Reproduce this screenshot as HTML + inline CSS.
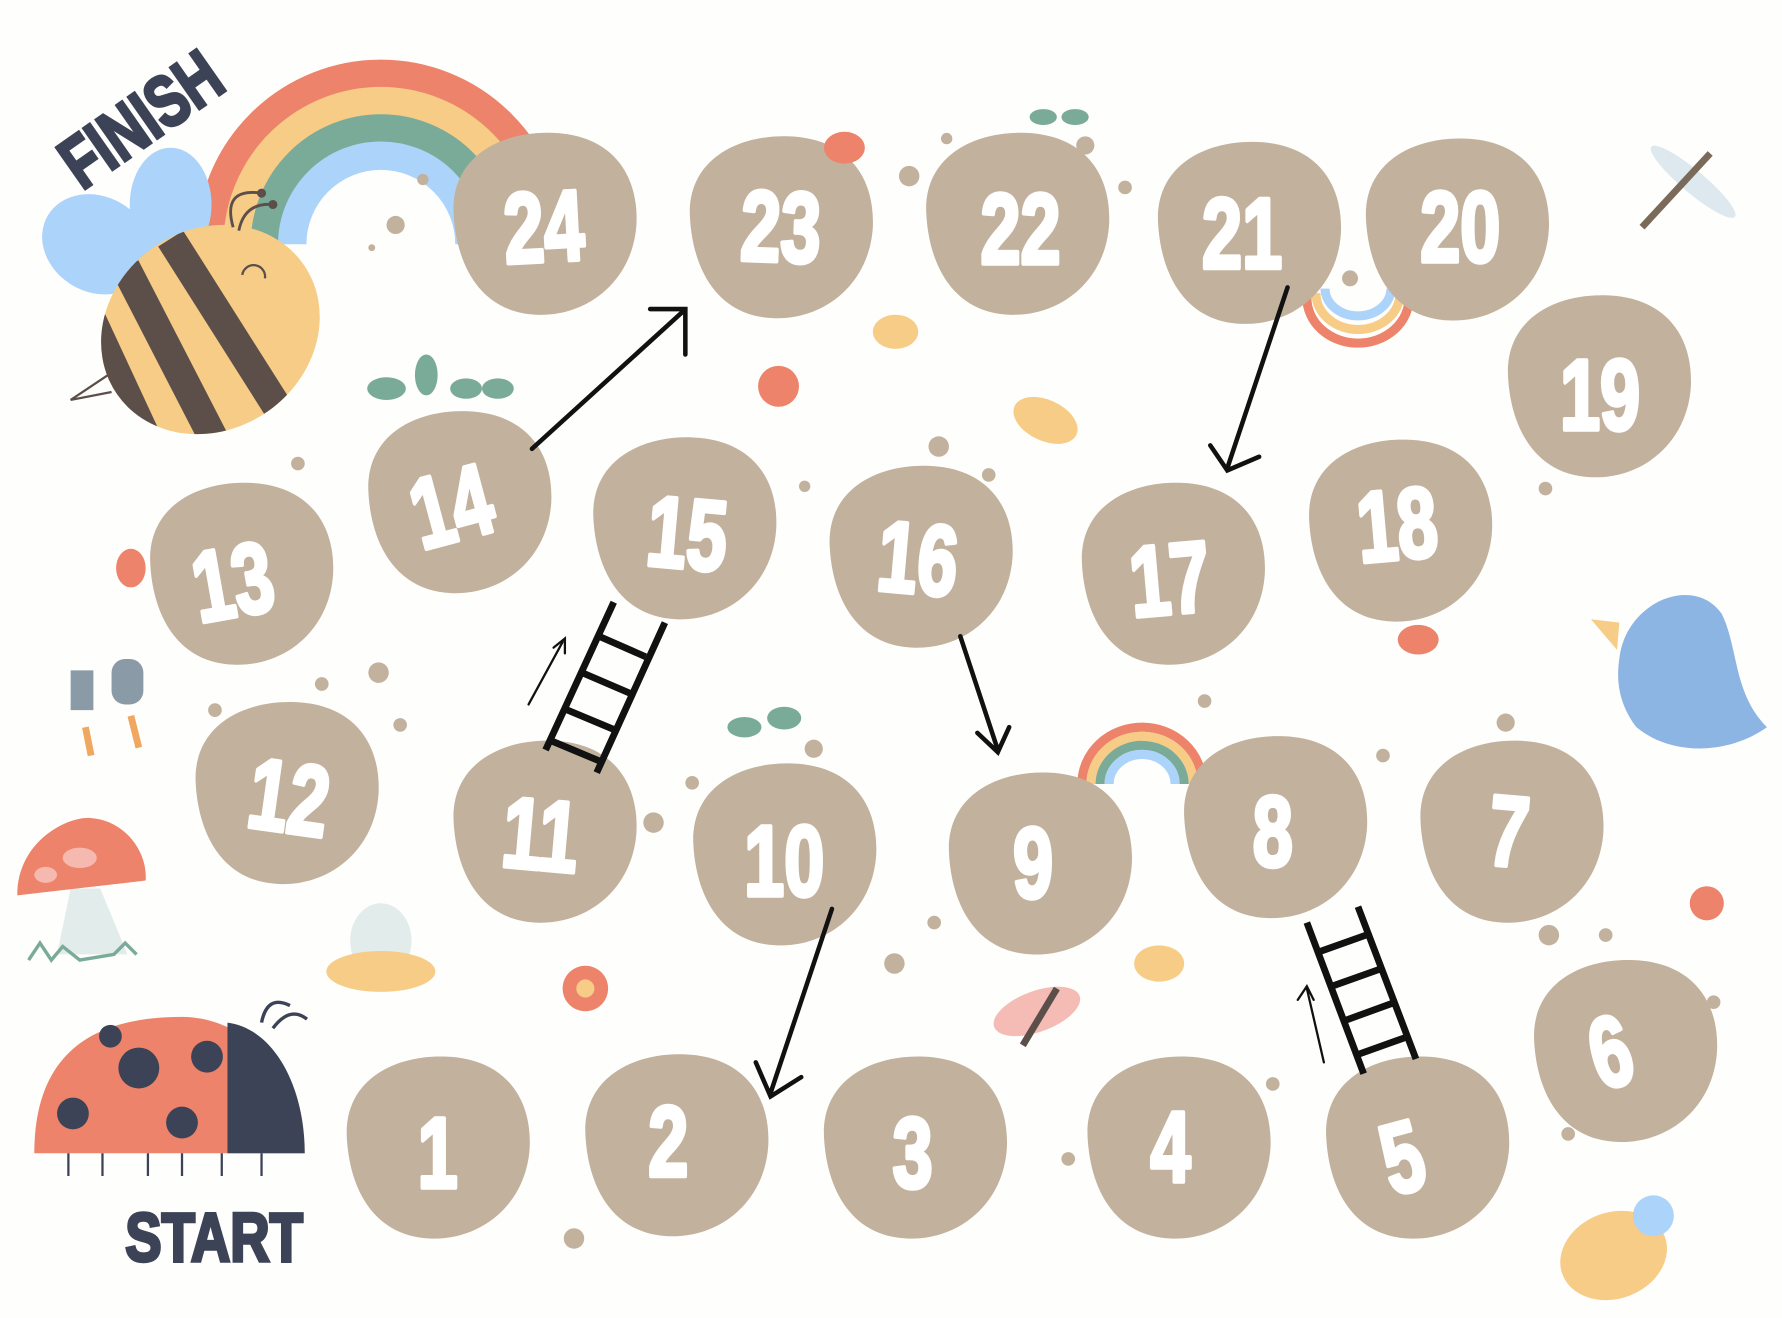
<!DOCTYPE html>
<html><head><meta charset="utf-8"><style>
html,body{margin:0;padding:0;background:#fefefc;}
svg{display:block}
.n{font-family:"Liberation Sans",sans-serif;font-weight:bold;fill:#fff;stroke:#fff;stroke-width:4;stroke-linejoin:round;font-size:88px;text-anchor:middle}
</style></head><body>
<svg width="1782" height="1318" viewBox="0 0 1568 1160" xmlns="http://www.w3.org/2000/svg">
<defs>
<path id="b" d="M-78 -10 C-80 -60 -35 -82 10 -80 C60 -78 85 -45 83 0 C80 50 40 82 -5 80 C-55 78 -76 35 -78 -10Z"/>
<clipPath id="bb"><ellipse cx="185" cy="290" rx="100" ry="88" transform="rotate(-35 185 290)"/></clipPath>
</defs>
<rect width="1568" height="1160" fill="#fefefc"/>
<g fill="none" stroke-width="25">
<path d="M185 215 A150 150 0 0 1 485 215" stroke="#ec836a"/>
<path d="M209 215 A126 126 0 0 1 461 215" stroke="#f6cc86"/>
<path d="M233 215 A102 102 0 0 1 437 215" stroke="#7aab98"/>
<path d="M257 215 A78 78 0 0 1 413 215" stroke="#acd3fa"/>
</g>
<text x="0" y="0" transform="translate(72,168) rotate(-35) scale(0.75,1)" font-family="Liberation Sans,sans-serif" font-weight="bold" font-size="64" fill="#3d4356" stroke="#3d4356" stroke-width="3">FINISH</text>
<ellipse cx="85" cy="215" rx="50" ry="42" fill="#acd3fa" transform="rotate(30 85 215)"/>
<ellipse cx="150" cy="180" rx="36" ry="50" fill="#acd3fa"/>
<ellipse cx="185" cy="290" rx="100" ry="88" fill="#f6cc86" transform="rotate(-35 185 290)"/>
<g clip-path="url(#bb)" stroke="#5c4f4a" stroke-width="26"><line x1="150" y1="210" x2="245" y2="360"/><line x1="110" y1="235" x2="195" y2="400"/><line x1="75" y1="270" x2="140" y2="410"/></g>
<path d="M213 242 a10 10 0 0 1 20 3" stroke="#5c4f4a" stroke-width="2" fill="none"/>
<path d="M205 200 q-10 -35 25 -30 M210 203 q5 -25 30 -23" stroke="#5c4f4a" stroke-width="2.5" fill="none"/>
<circle cx="230" cy="170" r="4" fill="#5c4f4a"/><circle cx="240" cy="180" r="4" fill="#5c4f4a"/>
<path d="M95 330 L62 352 L98 345" stroke="#5c4f4a" stroke-width="2" fill="none"/>
<path d="M1150 262 A45 40 0 0 0 1240 262" fill="none" stroke="#ec836a" stroke-width="8"/>
<path d="M1158 258 A37 32 0 0 0 1232 258" fill="none" stroke="#f6cc86" stroke-width="8"/>
<path d="M1166 254 A29 24 0 0 0 1224 254" fill="none" stroke="#acd3fa" stroke-width="8"/>
<path d="M952 690 A53 50 0 0 1 1058 690" fill="none" stroke="#ec836a" stroke-width="8"/>
<path d="M960 690 A45 42 0 0 1 1050 690" fill="none" stroke="#f6cc86" stroke-width="8"/>
<path d="M968 690 A37 34 0 0 1 1042 690" fill="none" stroke="#7aab98" stroke-width="8"/>
<path d="M976 690 A29 26 0 0 1 1034 690" fill="none" stroke="#acd3fa" stroke-width="8"/>
<g fill="#c2b19d">
<circle cx="348" cy="198" r="8"/><circle cx="372" cy="158" r="5"/><circle cx="327" cy="218" r="3"/><circle cx="800" cy="155" r="9"/><circle cx="833" cy="122" r="5"/><circle cx="955" cy="128" r="8"/><circle cx="990" cy="165" r="6"/><circle cx="826" cy="393" r="9"/><circle cx="870" cy="418" r="6"/><circle cx="262" cy="408" r="6"/><circle cx="333" cy="592" r="9"/><circle cx="283" cy="602" r="6"/><circle cx="352" cy="638" r="6"/><circle cx="189" cy="625" r="6"/><circle cx="575" cy="724" r="9"/><circle cx="609" cy="689" r="6"/><circle cx="716" cy="659" r="8"/><circle cx="787" cy="848" r="9"/><circle cx="822" cy="812" r="6"/><circle cx="1325" cy="636" r="8"/><circle cx="1217" cy="665" r="6"/><circle cx="1363" cy="823" r="9"/><circle cx="1413" cy="823" r="6"/><circle cx="940" cy="1020" r="6"/><circle cx="505" cy="1090" r="9"/><circle cx="1360" cy="430" r="6"/><circle cx="1120" cy="954" r="6"/><circle cx="1508" cy="882" r="6"/><circle cx="1380" cy="998" r="6"/><circle cx="1060" cy="617" r="6"/><circle cx="708" cy="428" r="5"/><circle cx="1188" cy="245" r="7"/>
</g>
<g fill="#c2b19d">
<use href="#b" x="477" y="197"/><use href="#b" x="685" y="200"/><use href="#b" x="893" y="197"/><use href="#b" x="1097" y="205"/><use href="#b" x="1280" y="202"/><use href="#b" x="1405" y="340"/><use href="#b" x="1230" y="467"/><use href="#b" x="1030" y="505"/><use href="#b" x="808" y="490"/><use href="#b" x="600" y="465"/><use href="#b" x="402" y="442"/><use href="#b" x="210" y="505"/><use href="#b" x="250" y="698"/><use href="#b" x="477" y="732"/><use href="#b" x="688" y="752"/><use href="#b" x="913" y="760"/><use href="#b" x="1120" y="728"/><use href="#b" x="1328" y="732"/><use href="#b" x="1428" y="925"/><use href="#b" x="1245" y="1010"/><use href="#b" x="1035" y="1010"/><use href="#b" x="803" y="1010"/><use href="#b" x="593" y="1008"/><use href="#b" x="383" y="1010"/>
</g>
<g class="n">
<text transform="translate(480,230) rotate(-3) scale(0.72,1)">24</text>
<text transform="translate(686,230) rotate(2) scale(0.72,1)">23</text>
<text transform="translate(898,232) scale(0.72,1)">22</text>
<text transform="translate(1093,236) scale(0.72,1)">21</text>
<text transform="translate(1285,230) scale(0.72,1)">20</text>
<text transform="translate(1408,378) scale(0.72,1)">19</text>
<text transform="translate(1232,492) rotate(-5) scale(0.72,1)">18</text>
<text transform="translate(1032,540) rotate(-5) scale(0.72,1)">17</text>
<text transform="translate(805,522) rotate(5) scale(0.72,1)">16</text>
<text transform="translate(602,500) rotate(5) scale(0.72,1)">15</text>
<text transform="translate(405,475) rotate(-15) scale(0.72,1)">14</text>
<text transform="translate(210,542) rotate(-10) scale(0.72,1)">13</text>
<text transform="translate(250,732) rotate(8) scale(0.72,1)">12</text>
<text transform="translate(473,765) rotate(5) scale(0.72,1)">11</text>
<text transform="translate(690,788) scale(0.72,1)">10</text>
<text transform="translate(909,790) scale(0.72,1)">9</text>
<text transform="translate(1120,762) scale(0.72,1)">8</text>
<text transform="translate(1325,762) rotate(5) scale(0.72,1)">7</text>
<text transform="translate(1425,955) rotate(-15) scale(0.72,1)">6</text>
<text transform="translate(1242,1048) rotate(-15) scale(0.72,1)">5</text>
<text transform="translate(1030,1040) scale(0.72,1)">4</text>
<text transform="translate(803,1045) scale(0.72,1)">3</text>
<text transform="translate(588,1035) scale(0.72,1)">2</text>
<text transform="translate(385,1045) scale(0.72,1)">1</text>
</g>
<g fill="none" stroke="#111" stroke-width="4" stroke-linecap="round">
<path d="M468 395 L600 275 M572 272 L603 272 L603 312"/>
<path d="M1133 253 L1080 412 M1065 392 L1080 414 L1108 402"/>
<path d="M845 560 L878 660 M860 645 L878 662 L888 640"/>
<path d="M732 800 L678 962 M665 935 L678 965 L705 948"/>
<path d="M465 620 L495 565 M487 570 L497 562 L497 575" stroke-width="2"/>
<path d="M1165 935 L1150 870 M1142 880 L1150 868 L1156 880" stroke-width="2"/>
</g>
<g stroke="#111" stroke-width="6" fill="none">
<path d="M540 530 L480 660 M585 548 L525 680 M527 560 L568 578 M512 592 L554 610 M497 624 L540 642 M485 652 L528 670"/>
<path d="M1150 812 L1200 945 M1195 798 L1246 932 M1160 838 L1205 822 M1172 868 L1217 852 M1184 898 L1228 882 M1195 928 L1240 912"/>
</g>
<path d="M30 1015 C30 920 90 895 160 895 C215 895 265 945 268 1015Z" fill="#ec836a"/>
<path d="M200 900 C240 905 268 955 268 1015 L200 1015Z" fill="#3d4356"/>
<g fill="#3d4356"><circle cx="122" cy="940" r="18"/><circle cx="64" cy="980" r="14"/><circle cx="160" cy="988" r="14"/><circle cx="182" cy="930" r="14"/><circle cx="97" cy="912" r="10"/></g>
<path d="M230 900 q5 -25 25 -15 M240 905 q15 -20 30 -8" stroke="#3d4356" stroke-width="3" fill="none"/>
<path d="M60 1015 v20 M90 1015 v20 M130 1015 v20 M160 1015 v20 M195 1015 v20 M230 1015 v20" stroke="#3d4356" stroke-width="2"/>
<text transform="translate(110,1110) scale(0.8,1)" font-family="Liberation Sans,sans-serif" font-weight="bold" font-size="60" fill="#3d4356" stroke="#3d4356" stroke-width="3">START</text>
<path d="M50 840 L62 782 L88 782 L112 840Z" fill="#e2eceb"/>
<path d="M15 788 C15 740 60 718 80 720 C110 722 130 750 128 775Z" fill="#ec836a"/>
<ellipse cx="70" cy="755" rx="15" ry="9" fill="#f5b9b0"/><ellipse cx="40" cy="770" rx="10" ry="7" fill="#f5b9b0"/>
<path d="M25 845 l10 -15 l10 15 l10 -12 l15 12 l30 -5 l10 -10 l10 10" stroke="#7aab98" stroke-width="3" fill="none"/>
<ellipse cx="335" cy="828" rx="27" ry="33" fill="#e2eceb"/>
<ellipse cx="335" cy="855" rx="48" ry="18" fill="#f6cc86"/>
<g fill="#8a9aa6"><rect x="62" y="590" width="20" height="35"/><rect x="98" y="580" width="28" height="40" rx="12"/></g>
<g stroke="#f0a860" stroke-width="6"><line x1="75" y1="640" x2="80" y2="665"/><line x1="115" y1="630" x2="122" y2="658"/></g>
<path d="M1425 580 C1430 530 1490 505 1515 540 C1530 570 1525 610 1555 640 C1520 665 1470 665 1440 640 C1425 620 1422 600 1425 580Z" fill="#8db5e3"/>
<path d="M1425 548 L1400 545 L1423 572Z" fill="#f6cc86"/>
<ellipse cx="1490" cy="160" rx="48" ry="10" fill="#dde9ee" transform="rotate(40 1490 160)"/>
<line x1="1505" y1="135" x2="1445" y2="200" stroke="#7a6a5a" stroke-width="6"/>
<ellipse cx="743" cy="130" rx="18" ry="14" fill="#ec836a"/>
<ellipse cx="915" cy="895" rx="40" ry="18" fill="#f5bcb5" transform="rotate(-20 900 900)"/>
<path d="M900 920 L930 870" stroke="#5c4f4a" stroke-width="6"/>
<ellipse cx="920" cy="370" rx="30" ry="18" fill="#f6cc86" transform="rotate(25 920 370)"/>
<circle cx="515" cy="870" r="20" fill="#ec836a"/><circle cx="515" cy="870" r="8" fill="#f6cc86"/>
<circle cx="685" cy="340" r="18" fill="#ec836a"/>
<circle cx="1502" cy="795" r="15" fill="#ec836a"/>
<ellipse cx="1420" cy="1105" rx="48" ry="38" fill="#f6cc86" transform="rotate(-20 1420 1105)"/>
<circle cx="1455" cy="1070" r="18" fill="#acd3fa"/>
<ellipse cx="1020" cy="848" rx="22" ry="16" fill="#f6cc86"/>
<ellipse cx="788" cy="292" rx="20" ry="15" fill="#f6cc86"/>
<ellipse cx="115" cy="500" rx="13" ry="17" fill="#ec836a"/>
<ellipse cx="1248" cy="563" rx="18" ry="13" fill="#ec836a"/>
<g fill="#7aab98"><ellipse cx="340" cy="342" rx="17" ry="10"/><ellipse cx="375" cy="330" rx="10" ry="18"/><ellipse cx="410" cy="342" rx="14" ry="9"/><ellipse cx="438" cy="342" rx="14" ry="9"/><ellipse cx="918" cy="103" rx="12" ry="7"/><ellipse cx="946" cy="103" rx="12" ry="7"/><ellipse cx="655" cy="640" rx="15" ry="9"/><ellipse cx="690" cy="632" rx="15" ry="10"/></g>
</svg>
</body></html>
